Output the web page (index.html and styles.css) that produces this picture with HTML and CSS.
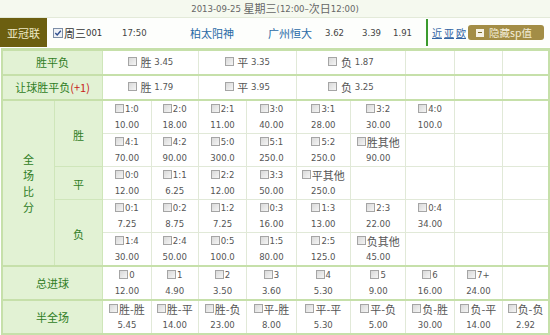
FILE: index.html
```html
<!DOCTYPE html>
<html lang="zh">
<head>
<meta charset="utf-8">
<title>亚冠联 柏太阳神 vs 广州恒大</title>
<link rel="stylesheet" href="styles.css">
</head>
<body>
<div class="page">
  <div class="datebar">2013-09-25 <span class="zh">星期三</span>(12:00–<span class="zh">次日</span>12:00)</div>
  <div class="match">
    <span class="league zh">亚冠联</span>
    <span class="no"><svg class="ck" width="10" height="10" viewBox="0 0 10 10"><rect x="0.5" y="0.5" width="9" height="9" fill="#eef1f6" stroke="#7d8ea6"/><path d="M2.3 5 L4.2 7 L7.8 2.8" fill="none" stroke="#2f4f8f" stroke-width="1.4"/></svg><span class="zh">周三</span>001</span>
    <span class="time">17:50</span>
    <span class="team home zh">柏太阳神</span>
    <span class="team away zh">广州恒大</span>
    <span class="odd o1">3.62</span>
    <span class="odd o2">3.39</span>
    <span class="odd o3">1.91</span>
    <span class="links zh"><a>近</a><a>亚</a><a>欧</a></span>
    <span class="btn"><i class="minus"></i><span class="zh">隐藏sp值</span></span>
  </div>
  <table class="odds">
    <colgroup>
      <col class="w52"><col class="w48">
      <col class="w48"><col class="w47"><col class="w48"><col class="w49"><col class="w54"><col class="w55"><col class="w48"><col class="w48"><col class="w46">
    </colgroup>
    <tbody class="grp">
      <tr class="r1">
        <th colspan="2" class="zh">胜平负</th>
        <td colspan="2"><i class="cb"></i> <span class="zh">胜</span> 3.45</td>
        <td colspan="2"><i class="cb"></i> <span class="zh">平</span> 3.35</td>
        <td colspan="2"><i class="cb"></i> <span class="zh">负</span> 1.87</td>
        <td></td><td></td><td></td>
      </tr>
    </tbody>
    <tbody class="grp">
      <tr class="r1">
        <th colspan="2" class="zh">让球胜平负<em>(+1)</em></th>
        <td colspan="2"><i class="cb"></i> <span class="zh">胜</span> 1.79</td>
        <td colspan="2"><i class="cb"></i> <span class="zh">平</span> 3.95</td>
        <td colspan="2"><i class="cb"></i> <span class="zh">负</span> 3.25</td>
        <td></td><td></td><td></td>
      </tr>
    </tbody>
    <tbody class="grp">
      <tr class="r2">
        <th rowspan="5" class="zh vert">全<br>场<br>比<br>分</th>
        <th rowspan="2" class="zh sub">胜</th>
        <td><i class="cb"></i>1:0<br>10.00</td>
        <td><i class="cb"></i>2:0<br>18.00</td>
        <td><i class="cb"></i>2:1<br>11.00</td>
        <td><i class="cb"></i>3:0<br>40.00</td>
        <td><i class="cb"></i>3:1<br>28.00</td>
        <td><i class="cb"></i>3:2<br>30.00</td>
        <td><i class="cb"></i>4:0<br>100.0</td>
        <td></td><td></td>
      </tr>
      <tr class="r2">
        <td><i class="cb"></i>4:1<br>70.00</td>
        <td><i class="cb"></i>4:2<br>90.00</td>
        <td><i class="cb"></i>5:0<br>300.0</td>
        <td><i class="cb"></i>5:1<br>250.0</td>
        <td><i class="cb"></i>5:2<br>250.0</td>
        <td><i class="cb"></i><span class="zh">胜其他</span><br>90.00</td>
        <td></td><td></td><td></td>
      </tr>
      <tr class="r2">
        <th class="zh sub">平</th>
        <td><i class="cb"></i>0:0<br>12.00</td>
        <td><i class="cb"></i>1:1<br>6.25</td>
        <td><i class="cb"></i>2:2<br>12.00</td>
        <td><i class="cb"></i>3:3<br>50.00</td>
        <td><i class="cb"></i><span class="zh">平其他</span><br>250.0</td>
        <td></td><td></td><td></td><td></td>
      </tr>
      <tr class="r2">
        <th rowspan="2" class="zh sub">负</th>
        <td><i class="cb"></i>0:1<br>7.25</td>
        <td><i class="cb"></i>0:2<br>8.75</td>
        <td><i class="cb"></i>1:2<br>7.25</td>
        <td><i class="cb"></i>0:3<br>16.00</td>
        <td><i class="cb"></i>1:3<br>13.00</td>
        <td><i class="cb"></i>2:3<br>22.00</td>
        <td><i class="cb"></i>0:4<br>34.00</td>
        <td></td><td></td>
      </tr>
      <tr class="r2">
        <td><i class="cb"></i>1:4<br>30.00</td>
        <td><i class="cb"></i>2:4<br>50.00</td>
        <td><i class="cb"></i>0:5<br>100.0</td>
        <td><i class="cb"></i>1:5<br>80.00</td>
        <td><i class="cb"></i>2:5<br>125.0</td>
        <td><i class="cb"></i><span class="zh">负其他</span><br>45.00</td>
        <td></td><td></td><td></td>
      </tr>
    </tbody>
    <tbody class="grp">
      <tr class="r2">
        <th colspan="2" class="zh">总进球</th>
        <td><i class="cb"></i>0<br>12.00</td>
        <td><i class="cb"></i>1<br>4.90</td>
        <td><i class="cb"></i>2<br>3.50</td>
        <td><i class="cb"></i>3<br>3.60</td>
        <td><i class="cb"></i>4<br>5.30</td>
        <td><i class="cb"></i>5<br>9.00</td>
        <td><i class="cb"></i>6<br>16.00</td>
        <td><i class="cb"></i>7+<br>24.00</td>
        <td></td>
      </tr>
    </tbody>
    <tbody class="grp">
      <tr class="r2">
        <th colspan="2" class="zh">半全场</th>
        <td><i class="cb"></i><span class="zh">胜-胜</span><br>5.45</td>
        <td><i class="cb"></i><span class="zh">胜-平</span><br>14.00</td>
        <td><i class="cb"></i><span class="zh">胜-负</span><br>23.00</td>
        <td><i class="cb"></i><span class="zh">平-胜</span><br>8.00</td>
        <td><i class="cb"></i><span class="zh">平-平</span><br>5.30</td>
        <td><i class="cb"></i><span class="zh">平-负</span><br>5.00</td>
        <td><i class="cb"></i><span class="zh">负-胜</span><br>30.00</td>
        <td><i class="cb"></i><span class="zh">负-平</span><br>14.00</td>
        <td><i class="cb"></i><span class="zh">负-负</span><br>2.92</td>
      </tr>
    </tbody>
  </table>
</div>
</body>
</html>
```
FILE: styles.css
```css
* { box-sizing: border-box; }
html, body { margin: 0; padding: 0; background: #fff; }
body {
  font-family: "DejaVu Sans Condensed", "DejaVu Sans", sans-serif;
  font-size: 9.5px;
  line-height: 16px;
  color: #555;
}
.zh { font-family: "Noto Sans CJK SC", sans-serif; font-size: 11px; }
td .zh, .datebar .zh, .no .zh { vertical-align: top; }

.page { width: 550px; }

.datebar {
  height: 18px;
  line-height: 17px;
  text-align: center;
  background: #f5f9ef;
  border-bottom: 1px solid #e3ead9;
  color: #666;
}

.match {
  display: flex;
  align-items: center;
  height: 29px;
  background: #fdfefc;
  color: #444;
}
.league {
  flex: none;
  width: 47px;
  align-self: stretch;
  background: #6c5f10;
  color: #efeac6;
  display: flex;
  align-items: center;
  justify-content: center;
}
.no { flex: none; width: 75px; padding-left: 6px; display: flex; align-items: center; color: #333; }
.ck { margin-right: 1px; }
.time { flex: none; width: 68px; color: #444; }
.team { flex: none; color: #2a6aa6; }
.home { width: 78px; }
.away { width: 57px; }
.odd { flex: none; color: #444; }
.o1 { width: 37px; }
.o2 { width: 31px; }
.o3 { width: 33px; }
.links {
  flex: none;
  align-self: stretch;
  display: flex;
  align-items: center;
  gap: 2px;
  width: 42px;
  padding-left: 4px;
  border-left: 2px solid #3b9a2d;
  margin: 1px 0;
  font-size: 10px;
}
.links a { color: #3465a4; text-decoration: underline; }
.btn {
  flex: none;
  width: 76px;
  height: 15px;
  border-radius: 3px;
  background: #a38d46;
  color: #f3eed9;
  display: flex;
  align-items: center;
  padding-left: 8px;
  gap: 5px;
}
.btn .zh { font-size: 10.5px; line-height: 15px; }
.minus {
  width: 8px; height: 8px;
  background: #f6f2e4;
  position: relative;
  display: block;
}
.minus::after {
  content: "";
  position: absolute;
  left: 2px; top: 3.5px;
  width: 4px; height: 1px;
  background: #7a6a2a;
}

.odds {
  width: 549px;
  margin: 1px 0 0 1px;
  border-collapse: collapse;
  table-layout: fixed;
  border: 2px solid #c6e0aa;
  border-top-width: 3px;
}
.w52 { width: 52px; } .w48 { width: 48px; } .w47 { width: 47px; } .w49 { width: 49px; }
.w54 { width: 54px; } .w55 { width: 55px; } .w46 { width: 46px; }

.grp { border-top: 2px solid #c6e0aa; }
.grp:first-of-type { border-top-width: 3px; }
th {
  background: #e2f2d4;
  color: #2f7d1f;
  font-weight: normal;
  border: 1px solid #cfe6ba;
  padding: 0;
  text-align: center;
}
th em { font-style: normal; color: #c8231a; }
.sub { padding-top: 3px; }
td {
  border: 1px solid #e1e9d8;
  padding: 0;
  text-align: center;
  background: #fff;
  color: #555;
}
.r1 { height: 25px; }
.r2 { height: 32px; }
.cb {
  display: inline-block;
  width: 9px;
  height: 9px;
  border: 1px solid #a5a5a5;
  background: linear-gradient(135deg, #d9d9d9, #f5f5f5);
  vertical-align: -1px;
  margin-right: 1px;
}
```
